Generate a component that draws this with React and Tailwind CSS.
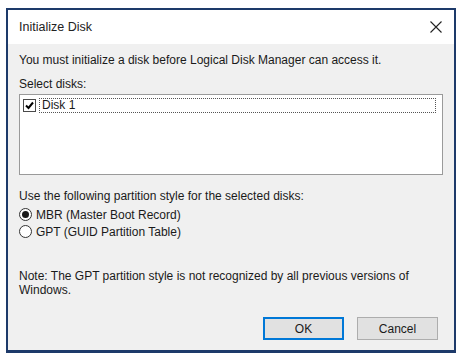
const font = { fontFamily: '"Liberation Sans", Arial, sans-serif' };

const CheckBox = () => (
  <span className="w-[13px] h-[13px] border border-[#4a4a4a] bg-white flex items-center justify-center shrink-0">
    <svg width="9" height="9" viewBox="0 0 9 9">
      <path d="M1 4.5 L3.5 7 L8 1.5" fill="none" stroke="#000" strokeWidth="2" />
    </svg>
  </span>
);

const Radio = ({ checked }) => (
  <span className="w-[13px] h-[13px] rounded-full border border-[#333333] bg-white flex items-center justify-center shrink-0">
    {checked && <span className="w-[7px] h-[7px] rounded-full bg-[#1a1a1a]" />}
  </span>
);

export default function App() {
  return (
    <div className="w-[460px] h-[362px] bg-white pt-[8px] pl-[6px] text-[12px] text-[#1a1a1a]" style={font}>
      <div className="w-[450px] h-[345px] border-2 border-b-[3px] border-[#1d3a6a] flex flex-col bg-[#f0f0f0]">
        <div className="h-[34px] bg-white flex items-center justify-between pl-[11px] pr-[12px] shrink-0">
          <span className="text-[12.5px] text-[#222]">Initialize Disk</span>
          <svg width="12" height="12" viewBox="0 0 12 12">
            <path d="M0.5 0.5 L11.5 11.5 M11.5 0.5 L0.5 11.5" stroke="#222" strokeWidth="1.1" />
          </svg>
        </div>
        <div className="flex flex-col px-[11px] pt-[9px] flex-1">
          <p className="leading-[15px]">You must initialize a disk before Logical Disk Manager can access it.</p>
          <p className="leading-[15px] mt-[9px]">Select disks:</p>
          <div className="mt-[2px] h-[81px] border border-[#9a9a9a] bg-white pt-[3px] pl-[3px] pr-[6px]">
            <div className="flex items-center gap-[3px]">
              <CheckBox />
              <span className="flex-1 border border-dotted border-[#555] leading-[13px] pl-[2px]">Disk 1</span>
            </div>
          </div>
          <p className="leading-[15px] mt-[14px]">Use the following partition style for the selected disks:</p>
          <div className="flex items-center gap-[4px] mt-[2px] h-[17px]">
            <Radio checked />
            <span>MBR (Master Boot Record)</span>
          </div>
          <div className="flex items-center gap-[4px] h-[17px]">
            <Radio />
            <span>GPT (GUID Partition Table)</span>
          </div>
          <p className="leading-[14px] mt-[29px]">
            Note: The GPT partition style is not recognized by all previous versions of
            <br />
            Windows.
          </p>
          <div className="flex justify-end gap-[13px] mt-[20px] pr-[5px]">
            <button className="w-[81px] h-[23px] border-2 border-[#0078d7] bg-[#e1e1e1] text-[12px]">OK</button>
            <button className="w-[81px] h-[23px] border border-[#adadad] bg-[#e1e1e1] text-[12px]">Cancel</button>
          </div>
        </div>
      </div>
    </div>
  );
}
